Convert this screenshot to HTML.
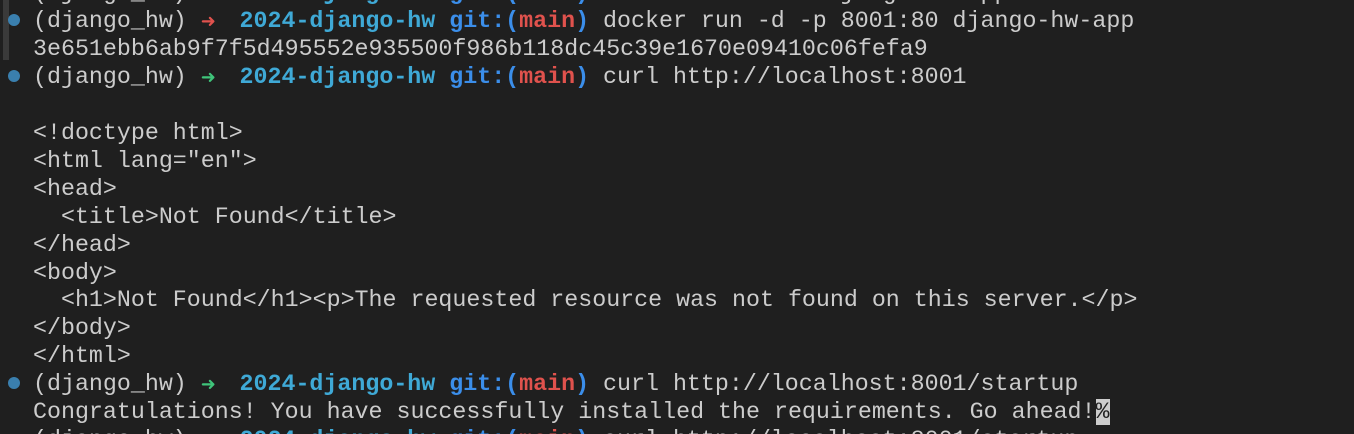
<!DOCTYPE html>
<html><head><style>
html,body{margin:0;padding:0;background:#1f1f1f;width:1354px;height:434px;overflow:hidden;position:relative}
.t{position:absolute;left:33px;top:-20px;font-family:"Liberation Mono","DejaVu Sans Mono",monospace;font-size:23.3px;line-height:27.95px;color:#cccccc;white-space:pre}
.a{display:inline-block;width:0.6em;font-family:"DejaVu Sans",sans-serif;font-weight:bold;font-size:18px;text-align:center}
.r{color:#e0524d}.g{color:#3fc47a}
.d{color:#3fa9d6;font-weight:bold}.b{color:#3b8eea;font-weight:bold}.m{color:#e0524d;font-weight:bold}
.dot{position:absolute;left:8px;width:12px;height:12px;border-radius:50%;background:#3a7fae}
.bar{position:absolute;left:3px;top:0;width:6px;height:60px;background:#3a3a3a}
.cur{background:#cccccc;color:#1f1f1f}
</style></head><body>
<div class="bar"></div>
<div class="dot" style="top:14px"></div>
<div class="dot" style="top:70px"></div>
<div class="dot" style="top:377px"></div>
<div class="t">(django_hw) <span class="a g">➜</span>  <span class="d">2024-django-hw</span> <span class="b">git:(</span><span class="m">main</span><span class="b">)</span> docker build -t django-hw-app .
(django_hw) <span class="a r">➜</span>  <span class="d">2024-django-hw</span> <span class="b">git:(</span><span class="m">main</span><span class="b">)</span> docker run -d -p 8001:80 django-hw-app
3e651ebb6ab9f7f5d495552e935500f986b118dc45c39e1670e09410c06fefa9
(django_hw) <span class="a g">➜</span>  <span class="d">2024-django-hw</span> <span class="b">git:(</span><span class="m">main</span><span class="b">)</span> curl http://localhost:8001

&lt;!doctype html&gt;
&lt;html lang="en"&gt;
&lt;head&gt;
  &lt;title&gt;Not Found&lt;/title&gt;
&lt;/head&gt;
&lt;body&gt;
  &lt;h1&gt;Not Found&lt;/h1&gt;&lt;p&gt;The requested resource was not found on this server.&lt;/p&gt;
&lt;/body&gt;
&lt;/html&gt;
(django_hw) <span class="a g">➜</span>  <span class="d">2024-django-hw</span> <span class="b">git:(</span><span class="m">main</span><span class="b">)</span> curl http://localhost:8001/startup
Congratulations! You have successfully installed the requirements. Go ahead!<span class="cur">%</span>
(django_hw) <span class="a g">➜</span>  <span class="d">2024-django-hw</span> <span class="b">git:(</span><span class="m">main</span><span class="b">)</span> curl http://localhost:8001/startup</div>
</body></html>
